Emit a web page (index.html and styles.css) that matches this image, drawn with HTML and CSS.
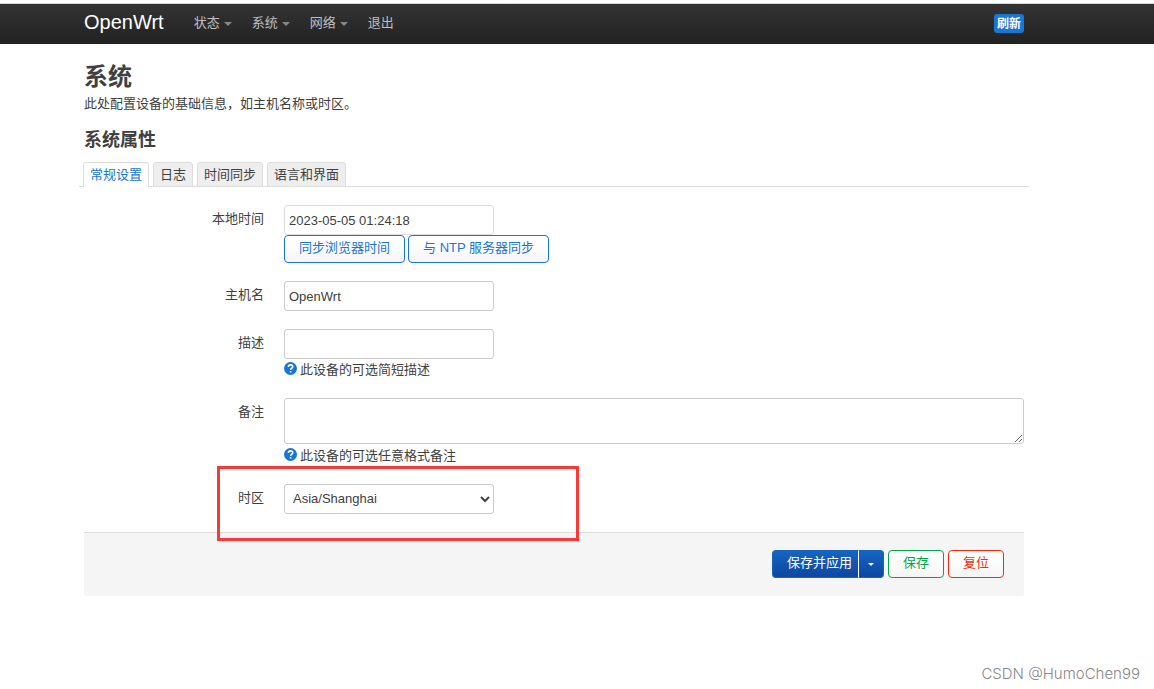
FILE: index.html
```html
<!DOCTYPE html>
<html lang="zh-CN">
<head>
<meta charset="utf-8">
<title>OpenWrt - 系统</title>
<link rel="stylesheet" href="styles.css">
</head>
<body>
<header class="topbar">
  <a class="brand" href="#">OpenWrt</a>
  <nav class="menu">
    <a class="menu-link has-caret" href="#">状态</a>
    <a class="menu-link has-caret" href="#">系统</a>
    <a class="menu-link has-caret" href="#">网络</a>
    <a class="menu-link" href="#">退出</a>
  </nav>
  <button class="refresh" type="button">刷新</button>
</header>
<main class="content">
  <h2 class="title">系统</h2>
  <p class="lead">此处配置设备的基础信息，如主机名称或时区。</p>
  <h3 class="subtitle">系统属性</h3>
  <nav class="tabs">
    <a class="tab active" href="#">常规设置</a>
    <a class="tab" href="#">日志</a>
    <a class="tab" href="#">时间同步</a>
    <a class="tab" href="#">语言和界面</a>
  </nav>
  <form class="form">
    <div class="row">
      <label class="label" for="localtime">本地时间</label>
      <div class="field">
        <input class="control readonly" id="localtime" type="text" value="2023-05-05 01:24:18" readonly>
        <div class="buttons">
          <button class="btn action" type="button">同步浏览器时间</button>
          <button class="btn action" type="button">与 NTP 服务器同步</button>
        </div>
      </div>
    </div>
    <div class="row">
      <label class="label" for="hostname">主机名</label>
      <div class="field"><input class="control" id="hostname" type="text" value="OpenWrt"></div>
    </div>
    <div class="row">
      <label class="label" for="description">描述</label>
      <div class="field">
        <input class="control" id="description" type="text">
        <p class="help"><svg class="help-icon" viewBox="0 0 13 13" aria-hidden="true"><circle cx="6.5" cy="6.5" r="6.5"/><path d="M4.4 4.9Q4.4 2.9 6.6 2.9T8.7 4.7Q8.7 5.6 7.5 6.3Q6.6 6.9 6.6 7.9M6.6 9V10.6"/></svg>此设备的可选简短描述</p>
      </div>
    </div>
    <div class="row">
      <label class="label" for="notes">备注</label>
      <div class="field">
        <textarea class="control notes" id="notes"></textarea>
        <p class="help"><svg class="help-icon" viewBox="0 0 13 13" aria-hidden="true"><circle cx="6.5" cy="6.5" r="6.5"/><path d="M4.4 4.9Q4.4 2.9 6.6 2.9T8.7 4.7Q8.7 5.6 7.5 6.3Q6.6 6.9 6.6 7.9M6.6 9V10.6"/></svg>此设备的可选任意格式备注</p>
      </div>
    </div>
    <div class="row marked">
      <label class="label" for="zone">时区</label>
      <div class="field"><select class="control zone" id="zone"><option>Asia/Shanghai</option></select></div>
    </div>
    <div class="actions">
      <div class="split">
        <button class="btn apply" type="button">保存并应用</button>
        <button class="btn more" type="button" aria-label="更多"></button>
      </div>
      <button class="btn save" type="button">保存</button>
      <button class="btn reset" type="button">复位</button>
    </div>
  </form>
</main>
<div class="watermark">CSDN @HumoChen99</div>
</body>
</html>
```
FILE: styles.css
```css
*, *::before, *::after { box-sizing: border-box; }
body {
  margin: 0;
  padding-top: 3px;
  min-height: 100vh;
  position: relative;
  background: #fff;
  color: #404040;
  font: 13px/18px "Liberation Sans", "Noto Sans CJK SC", sans-serif;
}
h2, h3, p { margin: 0; }
a { text-decoration: none; }
.topbar {
  display: flex;
  align-items: center;
  height: 41px;
  padding: 0 130px 0 84px;
  border-top: 1px solid #d8d8d8;
  background: linear-gradient(#333, #222);
}
.brand { color: #fff; font-size: 20px; line-height: 20px; padding-bottom: 4px; margin-right: 20px; }
.menu { display: flex; flex: 1; }
.menu-link { display: flex; align-items: center; padding: 0 10px 2px; color: #bfbfbf; }
.has-caret::after {
  content: "";
  margin: 2px 0 0 4px;
  border: 4px solid transparent;
  border-top-color: #888;
  border-bottom: 0;
}
.refresh {
  height: 19px;
  margin-bottom: 2px;
  padding: 1px 3px 0;
  border: 0;
  border-radius: 3px;
  background: #1976d2;
  color: #fff;
  font: bold 12px/18px "Liberation Sans", "Noto Sans CJK SC", sans-serif;
}
.content { padding: 15px 130px 0 84px; }
.title { font-size: 24px; line-height: 36px; }
.lead { line-height: 18px; }
.subtitle { font-size: 18px; line-height: 36px; margin-top: 9px; }
.tabs {
  display: flex;
  gap: 4px;
  margin: 4px -5px 18px;
  padding-left: 4px;
  border-bottom: 1px solid #ddd;
}
.tab {
  height: 24px;
  padding: 3px 6px 0;
  border: 1px solid #ddd;
  border-bottom: 0;
  border-radius: 4px 4px 0 0;
  background: #eee;
  color: #404040;
}
.tab.active { height: 25px; margin-bottom: -1px; background: #fff; color: #1976d2; }
.row { display: flex; gap: 20px; margin-bottom: 18px; position: relative; }
.label { width: 180px; padding-top: 5px; text-align: right; }
.field { flex: 1; display: flex; flex-direction: column; align-items: flex-start; }
.control {
  width: 210px;
  height: 30px;
  padding: 4px;
  border: 1px solid #ccc;
  border-radius: 3px;
  background: #fff;
  color: #404040;
  font: inherit;
}
.control.readonly { border-color: #ddd; }
.control.notes { width: 100%; height: 46px; margin-bottom: 1px; resize: vertical; }
.control.zone { padding-bottom: 5px; padding-top: 3px; }
.help { display: flex; align-items: center; gap: 3px; padding: 2px 0 1px; }
.help-icon { width: 13px; height: 13px; margin-bottom: 3px; fill: #1976d2; }
.help-icon path { fill: none; stroke: #fff; stroke-width: 1.6; }
.buttons { display: flex; gap: 3px; }
.btn {
  height: 28px;
  padding: 0 14px 2px;
  border: 1px solid;
  border-radius: 4px;
  background: linear-gradient(#fff, #fff 25%, #f5f5f5);
  font: inherit;
}
.action { color: #1976d2; }
.save { color: #00a54f; }
.reset { color: #f62a0c; }
.marked::after {
  content: "";
  position: absolute;
  top: -18px;
  left: 133px;
  width: 362px;
  height: 75px;
  border: 3px solid #fb3838;
  pointer-events: none;
}
.actions {
  display: flex;
  justify-content: flex-end;
  gap: 4px;
  padding: 17px 20px 18px;
  border-top: 1px solid #ddd;
  border-radius: 0 0 3px 3px;
  background: #f5f5f5;
}
.split { display: flex; }
.apply, .more { border-color: #1565c0; background: linear-gradient(#1565c0, #0d47a1); color: #fff; }
.apply { border-right: 1px solid #fff; border-radius: 4px 0 0 4px; padding-right: 6px; }
.more { display: flex; align-items: center; padding: 0 9px; border-left: 0; border-radius: 0 4px 4px 0; }
.more::after { content: ""; border: 3px solid transparent; border-top-color: #fff; border-bottom: 0; }
.watermark {
  position: absolute;
  right: 14px;
  bottom: 6px;
  color: #888;
  font: 300 15px/18px Inter, "Liberation Sans", sans-serif;
}
```
